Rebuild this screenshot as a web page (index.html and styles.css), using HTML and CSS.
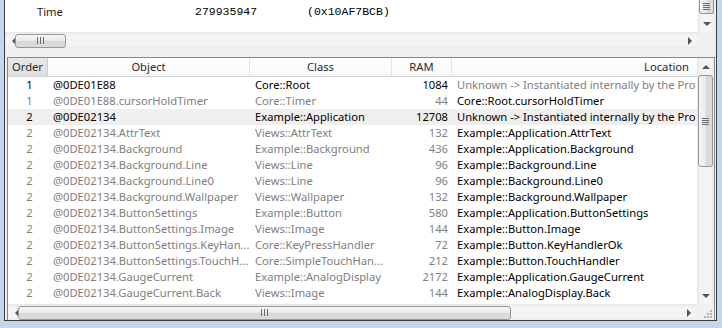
FILE: index.html
```html
<!DOCTYPE html>
<html lang="en">
<head>
    <meta charset="UTF-8">
    <title>Objects</title>
    <link rel="stylesheet" href="styles.css">
</head>
<body>
    <div class="window">
        <div class="client">

            <div class="watch">
                <div class="watch-main">
                    <div class="watch-view">
                        <div class="watch-row">
                            <span class="w-name">Time</span>
                            <span class="w-val">279935947</span>
                            <span class="w-hex">(0x10AF7BCB)</span>
                        </div>
                    </div>
                    <div class="vbar">
                        <div class="vthumb cut"><span class="grip-v"></span></div>
                        <div class="vtrack"></div>
                        <div class="vbtn"><span class="arr-down"></span></div>
                    </div>
                </div>
                <div class="hbar-row">
                    <div class="hbar">
                        <div class="hbtn"><span class="arr-left"></span></div>
                        <div class="hthumb top-thumb"><span class="grip-h"></span></div>
                        <div class="htrack"></div>
                        <div class="hbtn"><span class="arr-right"></span></div>
                    </div>
                    <div class="corner"></div>
                </div>
            </div>

            <div class="objects">
                <div class="objects-main">
                    <div class="table">
                        <div class="row head">
                            <div class="hcell sorted">Order</div>
                            <div class="hcell">Object</div>
                            <div class="hcell">Class</div>
                            <div class="hcell">RAM</div>
                            <div class="hcell loc">Location</div>
                        </div>
                        <div class="row">
                            <div class="c-order">1</div>
                            <div class="c-obj">@0DE01E88</div>
                            <div class="c-class">Core::Root</div>
                            <div class="c-ram">1084</div>
                            <div class="c-loc dim">Unknown -&gt; Instantiated internally by the Pro</div>
                        </div>
                        <div class="row sub">
                            <div class="c-order">1</div>
                            <div class="c-obj">@0DE01E88.cursorHoldTimer</div>
                            <div class="c-class">Core::Timer</div>
                            <div class="c-ram">44</div>
                            <div class="c-loc">Core::Root.cursorHoldTimer</div>
                        </div>
                        <div class="row selected">
                            <div class="c-order">2</div>
                            <div class="c-obj">@0DE02134</div>
                            <div class="c-class">Example::Application</div>
                            <div class="c-ram">12708</div>
                            <div class="c-loc">Unknown -&gt; Instantiated internally by the Pro</div>
                        </div>
                        <div class="row sub">
                            <div class="c-order">2</div>
                            <div class="c-obj">@0DE02134.AttrText</div>
                            <div class="c-class">Views::AttrText</div>
                            <div class="c-ram">132</div>
                            <div class="c-loc">Example::Application.AttrText</div>
                        </div>
                        <div class="row sub">
                            <div class="c-order">2</div>
                            <div class="c-obj">@0DE02134.Background</div>
                            <div class="c-class">Example::Background</div>
                            <div class="c-ram">436</div>
                            <div class="c-loc">Example::Application.Background</div>
                        </div>
                        <div class="row sub">
                            <div class="c-order">2</div>
                            <div class="c-obj">@0DE02134.Background.Line</div>
                            <div class="c-class">Views::Line</div>
                            <div class="c-ram">96</div>
                            <div class="c-loc">Example::Background.Line</div>
                        </div>
                        <div class="row sub">
                            <div class="c-order">2</div>
                            <div class="c-obj">@0DE02134.Background.Line0</div>
                            <div class="c-class">Views::Line</div>
                            <div class="c-ram">96</div>
                            <div class="c-loc">Example::Background.Line0</div>
                        </div>
                        <div class="row sub">
                            <div class="c-order">2</div>
                            <div class="c-obj">@0DE02134.Background.Wallpaper</div>
                            <div class="c-class">Views::Wallpaper</div>
                            <div class="c-ram">132</div>
                            <div class="c-loc">Example::Background.Wallpaper</div>
                        </div>
                        <div class="row sub">
                            <div class="c-order">2</div>
                            <div class="c-obj">@0DE02134.ButtonSettings</div>
                            <div class="c-class">Example::Button</div>
                            <div class="c-ram">580</div>
                            <div class="c-loc">Example::Application.ButtonSettings</div>
                        </div>
                        <div class="row sub">
                            <div class="c-order">2</div>
                            <div class="c-obj">@0DE02134.ButtonSettings.Image</div>
                            <div class="c-class">Views::Image</div>
                            <div class="c-ram">144</div>
                            <div class="c-loc">Example::Button.Image</div>
                        </div>
                        <div class="row sub">
                            <div class="c-order">2</div>
                            <div class="c-obj">@0DE02134.ButtonSettings.KeyHan...</div>
                            <div class="c-class">Core::KeyPressHandler</div>
                            <div class="c-ram">72</div>
                            <div class="c-loc">Example::Button.KeyHandlerOk</div>
                        </div>
                        <div class="row sub">
                            <div class="c-order">2</div>
                            <div class="c-obj">@0DE02134.ButtonSettings.TouchH...</div>
                            <div class="c-class">Core::SimpleTouchHan...</div>
                            <div class="c-ram">212</div>
                            <div class="c-loc">Example::Button.TouchHandler</div>
                        </div>
                        <div class="row sub">
                            <div class="c-order">2</div>
                            <div class="c-obj">@0DE02134.GaugeCurrent</div>
                            <div class="c-class">Example::AnalogDisplay</div>
                            <div class="c-ram">2172</div>
                            <div class="c-loc">Example::Application.GaugeCurrent</div>
                        </div>
                        <div class="row sub">
                            <div class="c-order">2</div>
                            <div class="c-obj">@0DE02134.GaugeCurrent.Back</div>
                            <div class="c-class">Views::Image</div>
                            <div class="c-ram">144</div>
                            <div class="c-loc">Example::AnalogDisplay.Back</div>
                        </div>
                    </div>
                    <div class="vbar">
                        <div class="vbtn"><span class="arr-up"></span></div>
                        <div class="vthumb list-thumb"><span class="grip-v"></span></div>
                        <div class="vtrack"></div>
                        <div class="vbtn"><span class="arr-down"></span></div>
                    </div>
                </div>
                <div class="hbar-row">
                    <div class="hbar">
                        <div class="hbtn"><span class="arr-left"></span></div>
                        <div class="hthumb list-hthumb"><span class="grip-h"></span></div>
                        <div class="htrack"></div>
                        <div class="hbtn"><span class="arr-right"></span></div>
                    </div>
                    <div class="corner sizer">
                        <svg width="17" height="16" viewBox="0 0 17 16">
                            <g fill="#b4b4b4">
                                <rect x="13" y="6" width="2" height="2"/>
                                <rect x="10" y="9" width="2" height="2"/>
                                <rect x="13" y="9" width="2" height="2"/>
                                <rect x="7" y="12" width="2" height="2"/>
                                <rect x="10" y="12" width="2" height="2"/>
                                <rect x="13" y="12" width="2" height="2"/>
                            </g>
                        </svg>
                    </div>
                </div>
            </div>

        </div>
    </div>
</body>
</html>
```

FILE: styles.css
```css
* {
    box-sizing: border-box;
}
body {
    margin: 0;
    font-family: "Segoe UI", "Noto Sans", sans-serif;
    font-size: 11.2px;
    color: #000;
}
.window {
    width: 722px;
    height: 328px;
    display: flex;
    padding: 0 5px 7px 4px;
    background-color: #c3d8ee;
}
.client {
    flex: 1;
    display: flex;
    flex-direction: column;
    background-color: #f0f0f0;
    border: 1px solid #3c3c3c;
    border-top: none;
}

/* watch panel */
.watch {
    display: flex;
    flex-direction: column;
    height: 48px;
    margin-right: 1px;
}
.watch-main {
    display: flex;
    height: 33px;
}
.watch-view {
    flex: 1;
    background-color: #fff;
    padding-top: 4px;
}
.watch-row {
    display: flex;
    line-height: 16px;
    height: 16px;
}
.w-name {
    width: 190px;
    padding-left: 32px;
    color: #301818;
}
.w-val, .w-hex {
    font-family: "Liberation Mono", monospace;
    font-size: 11.5px;
}
.w-val {
    width: 112px;
}

/* scrollbars */
.vbar {
    width: 17px;
    display: flex;
    flex-direction: column;
    background: linear-gradient(to right, #e6e6e6, #f4f4f4 20%, #f4f4f4 80%, #e9e9e9);
}
.vtrack, .htrack {
    flex: 1;
}
.vbtn {
    height: 17px;
    display: flex;
    align-items: center;
    justify-content: center;
}
.hbar-row {
    display: flex;
    height: 16px;
}
.hbar {
    flex: 1;
    display: flex;
    align-items: center;
    border-top: 1px solid #e8e8e8;
    background: linear-gradient(#ececec, #f4f4f4 25%, #f4f4f4 75%, #ececec);
}
.hbtn {
    width: 17px;
    height: 15px;
    display: flex;
    align-items: center;
    justify-content: center;
}
.corner {
    width: 17px;
    background-color: #f0f0f0;
}
.sizer svg {
    display: block;
}
.hthumb {
    height: 14px;
    display: flex;
    align-items: center;
    justify-content: center;
    border: 1px solid #979797;
    border-radius: 3px;
    background: linear-gradient(#f6f6f6, #e9e9e9 50%, #d8d8d8 51%, #dcdcdc);
}
.top-thumb {
    width: 51px;
    margin-left: -7px;
}
.list-hthumb {
    width: 493px;
    margin-left: -7px;
}
.vthumb {
    width: 15px;
    margin-left: 1px;
    display: flex;
    align-items: center;
    justify-content: center;
    border: 1px solid #979797;
    border-radius: 3px;
    background: linear-gradient(to right, #f6f6f6, #e9e9e9 50%, #d8d8d8 51%, #dcdcdc);
}
.vthumb.cut {
    height: 14px;
    border-top: none;
    border-radius: 0 0 3px 3px;
}
.list-thumb {
    height: 92px;
}
.grip-h {
    width: 7px;
    height: 7px;
    background: repeating-linear-gradient(to right, #6b6b6b 0 1px, transparent 1px 3px);
}
.grip-v {
    width: 7px;
    height: 7px;
    background: repeating-linear-gradient(#6b6b6b 0 1px, transparent 1px 2px);
}
.arr-left, .arr-right {
    width: 0;
    height: 0;
    border-top: 4px solid transparent;
    border-bottom: 4px solid transparent;
}
.arr-left {
    border-right: 4px solid #555;
}
.arr-right {
    border-left: 4px solid #555;
}
.arr-up, .arr-down {
    width: 0;
    height: 0;
    border-left: 4px solid transparent;
    border-right: 4px solid transparent;
}
.arr-up {
    border-bottom: 4px solid #555;
}
.arr-down {
    border-top: 4px solid #555;
}

/* objects list */
.objects {
    flex: 1;
    display: flex;
    flex-direction: column;
    margin: 9px 1px 0 2px;
    border: 1px solid #828790;
    border-bottom: none;
}
.objects-main {
    flex: 1;
    display: flex;
    min-height: 0;
}
.table {
    flex: 1;
    background-color: #fff;
    overflow: hidden;
}
.row {
    display: grid;
    grid-template-columns: 40px 202px 142px 60px 1fr;
    height: 16px;
    line-height: 16px;
    white-space: nowrap;
}
.row > div {
    overflow: hidden;
}
.row.head {
    height: 19px;
    line-height: 18px;
    background: linear-gradient(#ffffff, #f7f8fa);
    border-bottom: 1px solid #d5d5d5;
}
.hcell {
    text-align: center;
    border-right: 1px solid #e3e4e6;
    color: #2b2b2b;
}
.hcell.sorted {
    background: linear-gradient(#e8e8e8, #dedede);
    border-right-color: #d0d0d0;
}
.hcell.loc {
    text-align: right;
    padding-right: 8px;
    border-right: none;
}
.c-order {
    text-align: center;
    padding-left: 3px;
}
.c-obj, .c-class {
    padding-left: 5px;
}
.c-ram {
    text-align: right;
    padding-right: 4px;
}
.c-loc {
    padding-left: 5px;
}
.row.sub .c-order,
.row.sub .c-obj,
.row.sub .c-class,
.row.sub .c-ram,
.c-loc.dim {
    color: #808080;
}
.row.selected {
    background-color: #efefef;
}
```
